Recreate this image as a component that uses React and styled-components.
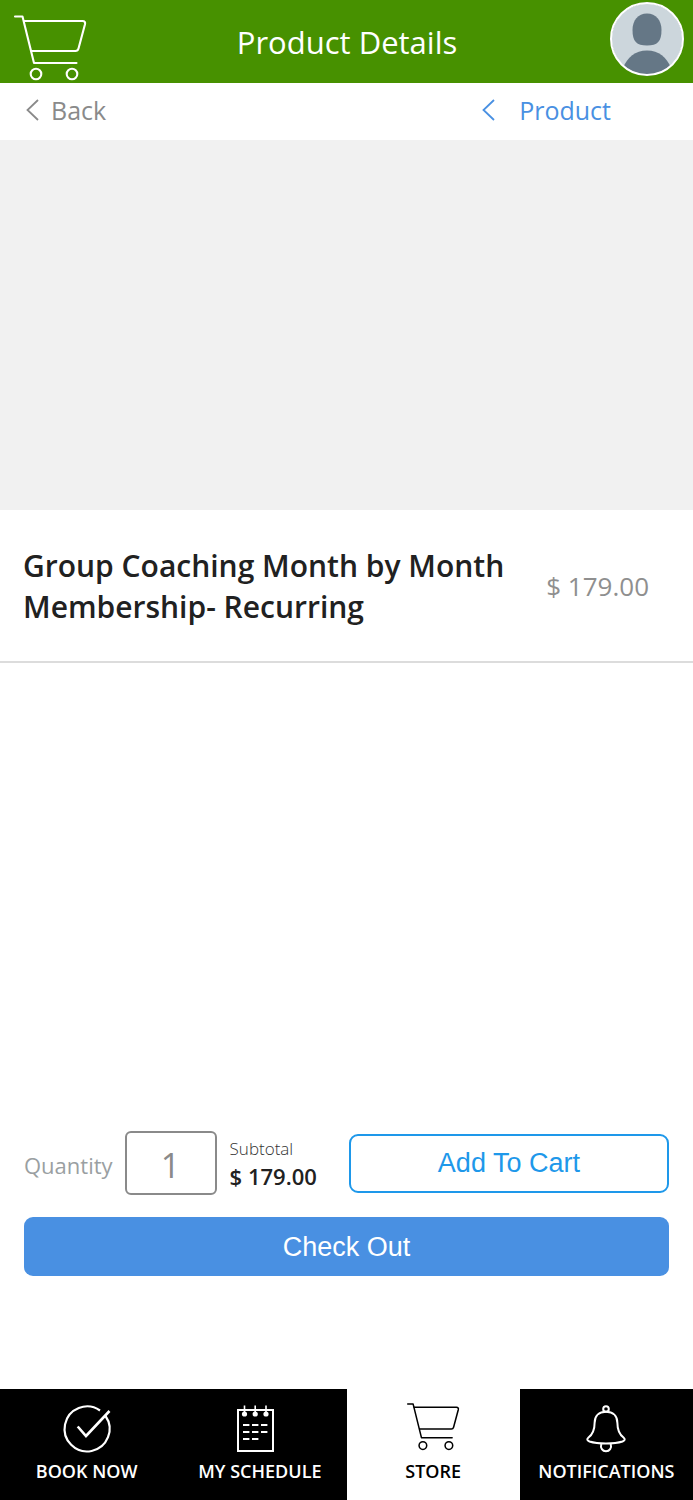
import React, { useState } from 'react';
import styled, { createGlobalStyle } from 'styled-components';

const GlobalStyle = createGlobalStyle`
  * { box-sizing: border-box; }
  body {
    margin: 0;
    background: #fff;
    font-family: 'Open Sans', 'Noto Sans', sans-serif;
  }
  button, a, input { font-family: inherit; }
`;

const Page = styled.div`
  display: flex;
  flex-direction: column;
  min-height: 100vh;
`;

const Header = styled.header`
  display: grid;
  grid-template-columns: 1fr auto 1fr;
  padding: 2px 9px 7px 10px;
  background: #479100;
  color: #fff;
`;

const PageTitle = styled.h1`
  margin: 0;
  align-self: center;
  font-size: 31px;
  line-height: 44px;
  font-weight: 400;
  padding-top: 6px;
`;

const CartButton = styled.button`
  justify-self: start;
  height: 74px;
  padding: 13px 4px 0;
  border: 0;
  background: none;
  color: inherit;
  cursor: pointer;
`;

const AvatarButton = styled.button`
  justify-self: end;
  width: 74px;
  height: 74px;
  padding: 0;
  border: 0;
  background: none;
  cursor: pointer;
`;

const Drawing = styled.svg`
  display: block;
  overflow: visible;
  fill: none;
  stroke: currentColor;
  flex: none;
`;

const SubBar = styled.nav`
  display: flex;
  justify-content: space-between;
  padding: 9px 82px 12px 26px;
`;

const CrumbLink = styled.a`
  display: flex;
  align-items: center;
  gap: ${(p) => p.$gap}px;
  font-size: 25px;
  line-height: 36px;
  text-decoration: none;
  color: ${(p) => p.$color};
`;

const ImageArea = styled.div`
  height: 370px;
  background: #f1f1f1;
`;

const ProductInfo = styled.section`
  display: flex;
  align-items: center;
  justify-content: space-between;
  gap: 24px;
  padding: 35px 44px 34px 23px;
  border-bottom: 2px solid #dcdcdc;
`;

const ProductName = styled.h2`
  margin: 0;
  max-width: 490px;
  font-size: 30px;
  line-height: 41px;
  font-weight: 600;
  color: #212121;
`;

const Price = styled.span`
  font-size: 26px;
  line-height: 36px;
  white-space: nowrap;
  color: #8f8f8f;
`;

const Purchase = styled.form`
  display: flex;
  flex-direction: column;
  gap: 22px;
  margin-top: auto;
  padding: 24px 24px 113px;
`;

const PurchaseRow = styled.div`
  display: flex;
  align-items: center;
`;

const QuantityLabel = styled.label`
  margin-right: 12px;
  padding-top: 4px;
  font-size: 22px;
  line-height: 32px;
  color: #9a9fa2;
`;

const QuantityInput = styled.input`
  width: 92px;
  height: 64px;
  margin-right: 13px;
  padding: 4px 0 0;
  border: 2px solid #8a8a8a;
  border-radius: 6px;
  background: #fff;
  font-size: 34px;
  text-align: center;
  color: #8a8a8a;
`;

const Subtotal = styled.div`
  display: flex;
  flex-direction: column;
  margin-right: 32px;
  white-space: nowrap;
`;

const SubtotalLabel = styled.span`
  font-size: 17px;
  line-height: 26px;
  font-weight: 300;
  color: #333;
`;

const SubtotalValue = styled.span`
  font-size: 22px;
  line-height: 28px;
  font-weight: 600;
  color: #212121;
`;

const ActionButton = styled.button`
  flex: ${(p) => (p.$primary ? 'none' : '1')};
  height: 59px;
  padding: 0;
  border: ${(p) => (p.$primary ? '0' : '2px solid #1e98ea')};
  border-radius: 9px;
  background: ${(p) => (p.$primary ? '#4990e2' : '#fff')};
  color: ${(p) => (p.$primary ? '#fff' : '#1e98ea')};
  font-family: 'Liberation Sans', Arial, sans-serif;
  font-size: 27px;
  line-height: 32px;
  cursor: pointer;
`;

const TabBar = styled.nav`
  display: grid;
  grid-template-columns: repeat(4, 1fr);
  background: #000;
`;

const Tab = styled.a`
  display: flex;
  flex-direction: column;
  align-items: center;
  gap: 8px;
  padding: 14px 0 19px;
  font-size: 18px;
  line-height: 20px;
  font-weight: 600;
  white-space: nowrap;
  text-decoration: none;
  background: ${(p) => (p.$active ? '#fff' : '#000')};
  color: ${(p) => (p.$active ? '#000' : '#fff')};
`;

function CartIcon({ width, height }) {
  return (
    <Drawing width={width} height={height} viewBox="0 0 72 66" preserveAspectRatio="xMidYMin meet" strokeWidth="2.1" strokeLinecap="round" strokeLinejoin="round" aria-hidden="true">
      <path d="M1 1.5H8.5L20 48H62.5" />
      <path d="M10 6H68.5Q71.800 6 71 9.300L64.500 33.500Q63.800 36 61.500 36H17.500" />
      <circle cx="22" cy="59" r="5.300" />
      <circle cx="58" cy="59" r="5.300" />
    </Drawing>
  );
}

function Chevron() {
  return (
    <Drawing width="13" height="22" viewBox="0 0 13 22" strokeWidth="1.800" aria-hidden="true">
      <path d="M12 1L1.500 11L12 21" />
    </Drawing>
  );
}

function Avatar() {
  return (
    <Drawing width="74" height="74" viewBox="0 0 74 74" stroke="none" aria-hidden="true">
      <defs>
        <clipPath id="avatar-disc"><circle cx="37" cy="37" r="35.500" /></clipPath>
      </defs>
      <circle cx="37" cy="37" r="36" fill="#ccd6dc" />
      <g clipPath="url(#avatar-disc)" fill="#657786" stroke="none">
        <path d="M37 11.500C46 11.500 51.500 18.500 51.500 28C51.500 39.500 47.500 43.500 37 43.500C26.500 43.500 22.500 39.500 22.500 28C22.500 18.500 28 11.500 37 11.500Z" />
        <path d="M13 66C17.500 55 25 48.500 37 48.500C49 48.500 56.500 55 61 66V74H13Z" />
      </g>
      <circle cx="37" cy="37" r="36" stroke="#fff" strokeWidth="2" />
    </Drawing>
  );
}

function BookIcon() {
  return (
    <Drawing width="52" height="50" viewBox="0 0 52 50" strokeWidth="2.200" aria-hidden="true">
      <path d="M39 7.500A22.500 22.500 0 1 0 44.500 13" />
      <path d="M16.700 23.500L25 33L48.500 8" strokeWidth="2.600" />
    </Drawing>
  );
}

function ScheduleIcon() {
  return (
    <Drawing width="52" height="50" viewBox="0 0 52 50" strokeWidth="2" aria-hidden="true">
      <rect x="4" y="7" width="35" height="41" />
      <path d="M10.500 2.500V10M21.200 2.500V10M32 2.500V10" strokeWidth="1.600" />
      <g fill="currentColor" stroke="none">
        <circle cx="10.500" cy="11" r="2.600" />
        <circle cx="21.200" cy="11" r="2.600" />
        <circle cx="32" cy="11" r="2.600" />
      </g>
      <path d="M9 22H15.400M18 22H24.400M27 22H33.400M9 29H15.400M18 29H24.400M27 29H33.400M9 36H15.400M18 36H24.400" />
    </Drawing>
  );
}

function BellIcon() {
  return (
    <Drawing width="52" height="50" viewBox="0 0 52 50" strokeWidth="2" strokeLinejoin="round" aria-hidden="true">
      <circle cx="26" cy="6" r="2.800" />
      <path d="M26 8.800C19 8.800 14.600 13 14.600 20C14.600 28 12.500 31.500 8.500 34.500C6.500 36.300 7 37.500 9.500 38.500C18 41.200 34 41.200 42.500 38.500C45 37.500 45.500 36.300 43.500 34.500C39.500 31.500 37.400 28 37.400 20C37.400 13 33 8.800 26 8.800Z" />
      <path d="M21.300 41C20 45 22.500 48.300 26 48.300C29.500 48.300 32 45 30.700 41" />
    </Drawing>
  );
}

export default function App() {
  const [quantity, setQuantity] = useState('1');

  return (
    <Page>
      <GlobalStyle />
      <Header>
        <CartButton type="button" aria-label="Cart">
          <CartIcon width="72" height="66" />
        </CartButton>
        <PageTitle>Product Details</PageTitle>
        <AvatarButton type="button" aria-label="Account">
          <Avatar />
        </AvatarButton>
      </Header>

      <SubBar aria-label="Breadcrumb">
        <CrumbLink href="#back" $gap={12} $color="#8a8a8a">
          <Chevron />
          Back
        </CrumbLink>
        <CrumbLink href="#product" $gap={24} $color="#4990e2">
          <Chevron />
          Product
        </CrumbLink>
      </SubBar>

      <ImageArea />

      <ProductInfo>
        <ProductName>Group Coaching Month by Month Membership- Recurring</ProductName>
        <Price>$ 179.00</Price>
      </ProductInfo>

      <Purchase onSubmit={(e) => e.preventDefault()}>
        <PurchaseRow>
          <QuantityLabel htmlFor="quantity">Quantity</QuantityLabel>
          <QuantityInput
            id="quantity"
            type="text"
            inputMode="numeric"
            value={quantity}
            onChange={(e) => setQuantity(e.target.value)}
          />
          <Subtotal>
            <SubtotalLabel>Subtotal</SubtotalLabel>
            <SubtotalValue>$ 179.00</SubtotalValue>
          </Subtotal>
          <ActionButton type="button">Add To Cart</ActionButton>
        </PurchaseRow>
        <ActionButton type="submit" $primary>Check Out</ActionButton>
      </Purchase>

      <TabBar aria-label="Main">
        <Tab href="#book"><BookIcon />BOOK NOW</Tab>
        <Tab href="#schedule"><ScheduleIcon />MY SCHEDULE</Tab>
        <Tab href="#store" $active aria-current="page"><CartIcon width="52" height="50" />STORE</Tab>
        <Tab href="#notifications"><BellIcon />NOTIFICATIONS</Tab>
      </TabBar>
    </Page>
  );
}
